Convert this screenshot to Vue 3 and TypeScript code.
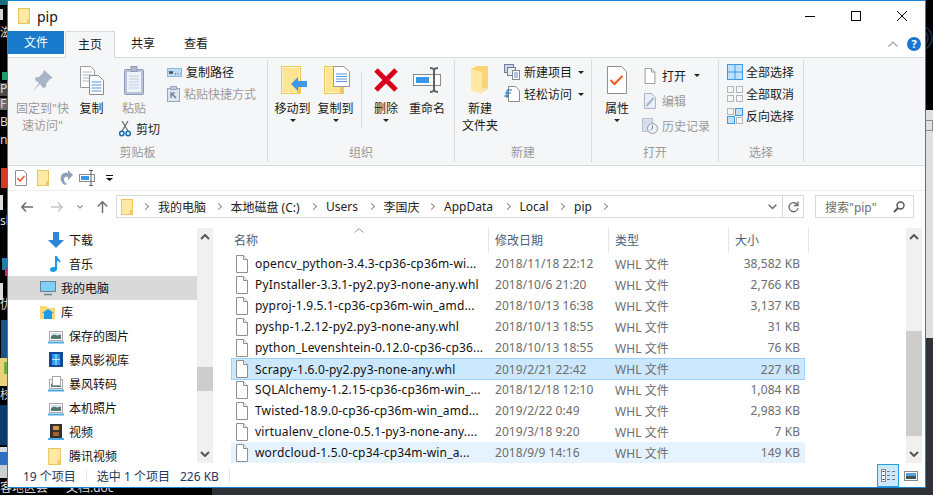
<script setup lang="ts">
interface FileRow {
  name: string
  date: string
  size: string
  state?: 'selected' | 'hover'
}

interface NavRow {
  label: string
  icon: string
  top?: boolean
  active?: boolean
}

const files: FileRow[] = [
  { name: 'opencv_python-3.4.3-cp36-cp36m-wi...', date: '2018/11/18 22:12', size: '38,582 KB' },
  { name: 'PyInstaller-3.3.1-py2.py3-none-any.whl', date: '2018/10/6 21:20', size: '2,766 KB' },
  { name: 'pyproj-1.9.5.1-cp36-cp36m-win_amd...', date: '2018/10/13 16:38', size: '3,137 KB' },
  { name: 'pyshp-1.2.12-py2.py3-none-any.whl', date: '2018/10/13 18:55', size: '31 KB' },
  { name: 'python_Levenshtein-0.12.0-cp36-cp36...', date: '2018/10/13 18:55', size: '76 KB' },
  { name: 'Scrapy-1.6.0-py2.py3-none-any.whl', date: '2019/2/21 22:42', size: '227 KB', state: 'selected' },
  { name: 'SQLAlchemy-1.2.15-cp36-cp36m-win_...', date: '2018/12/18 12:10', size: '1,084 KB' },
  { name: 'Twisted-18.9.0-cp36-cp36m-win_amd...', date: '2019/2/22 0:49', size: '2,983 KB' },
  { name: 'virtualenv_clone-0.5.1-py3-none-any....', date: '2019/3/18 9:20', size: '7 KB' },
  { name: 'wordcloud-1.5.0-cp34-cp34m-win_a...', date: '2018/9/9 14:16', size: '149 KB', state: 'hover' },
]

const navRows: NavRow[] = [
  { label: '下载', icon: 'download' },
  { label: '音乐', icon: 'music' },
  { label: '我的电脑', icon: 'pc', top: true, active: true },
  { label: '库', icon: 'lib', top: true },
  { label: '保存的图片', icon: 'photo' },
  { label: '暴风影视库', icon: 'film' },
  { label: '暴风转码', icon: 'convert' },
  { label: '本机照片', icon: 'photo' },
  { label: '视频', icon: 'video' },
  { label: '腾讯视频', icon: 'folder' },
]

const crumbs = [
  { label: '我的电脑', width: 59.5 },
  { label: '本地磁盘 (C:)', width: 82.5 },
  { label: 'Users', width: 44.5 },
  { label: '李国庆', width: 47.5 },
  { label: 'AppData', width: 62.5 },
  { label: 'Local', width: 41.5 },
  { label: 'pip', width: 30 },
]

const desktopBits = [
  { x: 0, y: 0, w: 7, h: 5, c: '#1b6f78' },
  { x: 0, y: 9, w: 3, h: 11, c: '#d4d4d4' },
  { x: 2, y: 72, w: 5, h: 8, c: '#1f9a6a' },
  { x: 0, y: 83, w: 7, h: 13, c: '#4a4a4a' },
  { x: 0, y: 98, w: 7, h: 12, c: '#6b6b6b' },
  { x: 1, y: 168, w: 6, h: 20, c: '#d23a22' },
  { x: 0, y: 195, w: 3, h: 15, c: '#dcdcdc' },
  { x: 2, y: 258, w: 5, h: 12, c: '#1c7fb0' },
  { x: 5, y: 268, w: 2, h: 8, c: '#c42a62' },
  { x: 0, y: 283, w: 3, h: 17, c: '#dcdcdc' },
  { x: 1, y: 320, w: 6, h: 38, c: '#14558f' },
  { x: 0, y: 358, w: 7, h: 28, c: '#e9d37a' },
  { x: 4, y: 362, w: 3, h: 12, c: '#6cb04a' },
  { x: 0, y: 405, w: 7, h: 40, c: '#0d3a66' },
  { x: 0, y: 447, w: 7, h: 5, c: '#d6dbe0' },
  { x: 0, y: 452, w: 7, h: 13, c: '#2f6fc0' },
  { x: 0, y: 465, w: 7, h: 13, c: '#cfcfcf' },
]

const desktopLabels = [
  { text: '滋', y: 26 },
  { text: 'P', y: 82 },
  { text: 'F', y: 97 },
  { text: 'B', y: 115 },
  { text: 'na', y: 133 },
  { text: 'sh', y: 214 },
  { text: '优', y: 298 },
  { text: '校', y: 388 },
]
</script>

<template>
  <div class="desktop">
    <i
      v-for="bit in desktopBits"
      :key="bit.y + '-' + bit.x"
      class="bit"
      :style="{ left: bit.x + 'px', top: bit.y + 'px', width: bit.w + 'px', height: bit.h + 'px', background: bit.c }"
    ></i>
    <span
      v-for="item in desktopLabels"
      :key="item.text"
      class="desk-label"
      :style="{ top: item.y + 'px' }"
    >{{ item.text }}</span>
    <span class="desk-file first">客地区县</span>
    <span class="desk-file second">文档.doc</span>
    <div class="dark-bottom"></div>
    <div class="strip-right">
      <svg class="rings" width="7" height="60" viewBox="0 0 7 60" fill="none" stroke="#17324f" stroke-width="1.5">
        <circle cx="-6" cy="30" r="8" />
        <circle cx="-6" cy="30" r="12" />
      </svg>
      <div class="strip-gray"><i></i></div>
    </div>

    <svg width="0" height="0" class="defs">
      <defs>
        <symbol id="folder" viewBox="0 0 12 16">
          <rect x="0.5" y="0.5" width="11" height="15" fill="#ffeaa3" stroke="#e9c65c" />
          <rect x="9" y="11" width="3" height="5" fill="#eecb66" />
        </symbol>
        <symbol id="doc" viewBox="0 0 12 18">
          <path d="M.5.5h7l4 4v13H.5z" fill="#fff" stroke="#8f8f8f" />
          <path d="M7.5.5v4h4" fill="#f2f2f2" stroke="#8f8f8f" />
        </symbol>
        <symbol id="bigfolder" viewBox="0 0 20 28">
          <rect x="0.5" y="0.5" width="19" height="27" fill="#ffe591" stroke="#eac557" />
          <rect x="1.5" y="1.5" width="17" height="25" fill="none" stroke="#fff2c4" />
          <rect x="16" y="21" width="4" height="7" fill="#eec95f" />
        </symbol>
        <symbol id="screen" viewBox="0 0 16 16">
          <path d="M0 13.500h16v2H0z" fill="#4fa9e6" />
          <rect x="1.500" y="3.500" width="13" height="9" fill="#fff" stroke="#a8a8a8" />
          <rect x="3" y="5" width="10" height="6" fill="#d5e5ee" />
          <path d="M3 8l3-1.500 3 1 4-1V11H3z" fill="#53776f" />
        </symbol>
      </defs>
    </svg>

    <main class="window">
      <header class="titlebar">
        <svg class="title-icon" width="12" height="16"><use href="#folder" /></svg>
        <span class="title-text">pip</span>
        <div class="controls">
          <svg width="10" height="10" viewBox="0 0 10 10"><path d="M0 5.500h10" stroke="#000" /></svg>
          <svg width="10" height="10" viewBox="0 0 10 10"><rect x=".5" y=".5" width="9" height="9" fill="none" stroke="#000" /></svg>
          <svg width="10" height="10" viewBox="0 0 10 10"><path d="M0 0l10 10M10 0L0 10" stroke="#000" /></svg>
        </div>
      </header>

      <nav class="tabs">
        <span class="tab-file">文件</span>
        <span class="tab-home">主页</span>
        <span class="tab share">共享</span>
        <span class="tab view">查看</span>
        <svg class="collapse" width="10" height="6" viewBox="0 0 10 6"><path d="M.5 5.500L5 1l4.500 4.500" fill="none" stroke="#a0a0a0" stroke-width="1.200" /></svg>
        <span class="help">?</span>
      </nav>

      <section class="ribbon">
        <div class="group g-clip">
          <div class="group-body">
            <div class="big disabled w-pin">
              <div class="big-icon">
                <svg width="22" height="22" viewBox="0 0 22 22">
                  <path d="M12 1l9 8-3 1-4 5 0 3-3 1-3-4-7 7 6-8-4-3 1-3 3 0 4-4z" fill="#aab4c8" />
                </svg>
              </div>
              <span>固定到"快</span>
              <span>速访问"</span>
            </div>
            <div class="big w-copy">
              <div class="big-icon">
                <svg width="24" height="29" viewBox="0 0 24 29">
                  <path d="M.5.5h10l4 4v17H.5z" fill="#fff" stroke="#9a9a9a" />
                  <path d="M2.500 6h9M2.500 9h9M2.500 12h9M2.500 15h9" stroke="#a9b8cc" />
                  <path d="M9.500 9.500h9l5 5v14h-14z" fill="#fff" stroke="#8a8a8a" />
                  <path d="M11.500 16h10M11.500 19h10M11.500 22h10M11.500 25h10" stroke="#5b93dc" />
                </svg>
              </div>
              <span>复制</span>
            </div>
            <div class="paste-col">
              <div class="big disabled">
                <div class="big-icon">
                  <svg width="20" height="29" viewBox="0 0 20 29">
                    <rect x=".5" y="3.500" width="19" height="25" rx="1" fill="#b9c4d8" stroke="#8c9cb8" />
                    <rect x="3" y="6" width="14" height="20" fill="#eef2f9" />
                    <path d="M5 10h10M5 13h10M5 16h10M5 19h10M5 22h10" stroke="#c2cde0" />
                    <rect x="7" y=".5" width="6" height="5" fill="#aeb9cc" stroke="#8c9cb8" />
                  </svg>
                </div>
                <span>粘贴</span>
              </div>
              <div class="cut">
                <svg width="12" height="16" viewBox="0 0 12 16" fill="none">
                  <path d="M3 10L9 0M9 10L3 0" stroke="#707070" stroke-width="1.300" />
                  <circle cx="2.800" cy="12.500" r="2.200" stroke="#1469b4" stroke-width="1.500" />
                  <circle cx="9.200" cy="12.500" r="2.200" stroke="#1469b4" stroke-width="1.500" />
                </svg>
                <span>剪切</span>
              </div>
            </div>
            <div class="small-col clip-small">
              <div class="small">
                <svg width="15" height="9" viewBox="0 0 15 9">
                  <rect x=".5" y=".5" width="14" height="8" fill="#bcdcf5" stroke="#8fb8d8" />
                  <path d="M2 3l1 3 1-3 1 3 1-3M8 6h1M10.500 6h1M13 6h.500" stroke="#333" fill="none" stroke-width=".8" />
                </svg>
                <span>复制路径</span>
              </div>
              <div class="small disabled">
                <svg width="13" height="16" viewBox="0 0 13 16">
                  <rect x=".5" y="2.500" width="12" height="13" fill="#dfe5ee" stroke="#98a6bd" />
                  <rect x="3.500" y=".5" width="6" height="3" fill="#c2ccdc" stroke="#98a6bd" />
                  <path d="M4 12V7h4M5 8l4 4" stroke="#60718f" fill="none" stroke-width="1.200" />
                </svg>
                <span>粘贴快捷方式</span>
              </div>
            </div>
          </div>
          <div class="group-label">剪贴板</div>
        </div>

        <div class="group g-org">
          <div class="group-body">
            <div class="big w-move">
              <div class="big-icon">
                <svg class="shift-r" width="26" height="28" viewBox="0 0 26 28">
                  <use href="#bigfolder" width="20" height="28" />
                  <path d="M10 18l7-7v4h9v6h-9v4z" fill="#3f97e8" />
                </svg>
              </div>
              <span>移动到</span>
              <i class="caret"></i>
            </div>
            <div class="big w-move">
              <div class="big-icon">
                <svg class="shift-r" width="26" height="28" viewBox="0 0 26 28">
                  <use href="#bigfolder" width="20" height="28" />
                  <path d="M9.500.5h10l6 5v15h-16z" fill="#fff" stroke="#9a9a9a" />
                  <path d="M12 8h11M12 10.500h11M12 13h11M12 15.500h11" stroke="#5b93dc" />
                </svg>
              </div>
              <span>复制到</span>
              <i class="caret"></i>
            </div>
            <i class="org-sep"></i>
            <div class="big w-del">
              <div class="big-icon">
                <svg width="26" height="26" viewBox="0 0 26 26"><path d="M3 3l20 20M23 3L3 23" stroke="#d9001b" stroke-width="5" /></svg>
              </div>
              <span>删除</span>
              <i class="caret"></i>
            </div>
            <div class="big w-ren">
              <div class="big-icon">
                <svg width="28" height="26" viewBox="0 0 28 26">
                  <rect x=".5" y="7.500" width="27" height="11" fill="#fff" stroke="#8a8a8a" />
                  <rect x="3" y="10" width="13" height="6" fill="#3a96e6" />
                  <path d="M17 1c1.500 0 3 .5 4 1.500C22 1.500 23.500 1 25 1M21 2.500v21M17 25c1.500 0 3-.5 4-1.500 1 1 2.500 1.500 4 1.500" fill="none" stroke="#606060" stroke-width="2" />
                </svg>
              </div>
              <span>重命名</span>
            </div>
          </div>
          <div class="group-label">组织</div>
        </div>

        <div class="group g-new">
          <div class="group-body">
            <div class="big w-newf">
              <div class="big-icon">
                <svg width="20" height="28" viewBox="0 0 20 28">
                  <path d="M1 3l6-3h11v22H1z" fill="#fbd670" />
                  <path d="M1 3l11 3v22L1 24z" fill="#ffe89f" />
                  <path d="M12 6l7 17-7 3z" fill="#f5d47c" opacity=".6" />
                </svg>
              </div>
              <span>新建</span>
              <span>文件夹</span>
            </div>
            <div class="small-col new-small">
              <div class="small">
                <svg width="16" height="16" viewBox="0 0 16 16">
                  <rect x=".5" y=".5" width="9" height="8" fill="#c8dcf0" stroke="#6b7f9a" />
                  <rect x="3.500" y="3.500" width="8" height="8" fill="#e8eef5" stroke="#7a7a7a" />
                  <rect x="8.500" y="6.500" width="7" height="9" fill="#fff" stroke="#8a8a8a" />
                  <path d="M10 9h4M10 11h4M10 13h4" stroke="#5b93dc" />
                </svg>
                <span>新建项目</span>
                <i class="caret side"></i>
              </div>
              <div class="small">
                <svg width="16" height="16" viewBox="0 0 16 16">
                  <path d="M4.500.5h7l4 4v11h-11z" fill="#fff" stroke="#8a8a8a" />
                  <path d="M3 4h5M1 7h6M0 10h5M3 4v8" stroke="#1469b4" fill="none" />
                </svg>
                <span>轻松访问</span>
                <i class="caret side"></i>
              </div>
            </div>
          </div>
          <div class="group-label">新建</div>
        </div>

        <div class="group g-open">
          <div class="group-body">
            <div class="big w-prop">
              <div class="big-icon">
                <svg width="20" height="28" viewBox="0 0 20 28">
                  <path d="M.5.5h14l5 5v22H.5z" fill="#fff" stroke="#8f8f8f" />
                  <path d="M3.500 14l4 4 8-8" fill="none" stroke="#f0591e" stroke-width="2" />
                </svg>
              </div>
              <span>属性</span>
              <i class="caret"></i>
            </div>
            <div class="small-col open-small">
              <div class="small">
                <svg class="ic-12" width="12" height="16"><use href="#doc" /></svg>
                <span>打开</span>
                <i class="caret side"></i>
              </div>
              <div class="small disabled">
                <svg class="ic-12" width="12" height="16" viewBox="0 0 12 16">
                  <path d="M.5.5h7l4 4v11H.5z" fill="#eaeff7" stroke="#a6b4cc" />
                  <path d="M2.500 13l7-8" stroke="#a6b4cc" stroke-width="2" />
                </svg>
                <span>编辑</span>
              </div>
              <div class="small disabled hist-row">
                <svg width="16" height="16" viewBox="0 0 16 16">
                  <rect x=".5" y=".5" width="10" height="13" fill="#d7deea" stroke="#b7c2d4" />
                  <circle cx="10.500" cy="10.500" r="5" fill="#eef1f6" stroke="#8d9ab0" />
                  <path d="M10.500 7.500v3l-2 1.500" stroke="#6c7a92" fill="none" />
                </svg>
                <span>历史记录</span>
              </div>
            </div>
          </div>
          <div class="group-label">打开</div>
        </div>

        <div class="group g-select">
          <div class="group-body">
            <div class="small-col select-small">
              <div class="small">
                <svg width="16" height="16" viewBox="0 0 16 16">
                  <rect x=".5" y=".5" width="15" height="15" fill="#bfe0fb" stroke="#3a9ae8" />
                  <path d="M8 0v16M0 8h16" stroke="#3a9ae8" />
                </svg>
                <span>全部选择</span>
              </div>
              <div class="small">
                <svg width="16" height="16" viewBox="0 0 16 16" fill="none" stroke="#b5b5b5">
                  <rect x=".5" y=".5" width="6" height="6" />
                  <rect x="9.500" y=".5" width="6" height="6" />
                  <rect x=".5" y="9.500" width="6" height="6" />
                  <rect x="9.500" y="9.500" width="6" height="6" />
                </svg>
                <span>全部取消</span>
              </div>
              <div class="small">
                <svg width="16" height="16" viewBox="0 0 16 16" fill="none" stroke="#b5b5b5">
                  <rect x=".5" y=".5" width="6" height="6" />
                  <rect x="8.500" y=".5" width="7" height="7" fill="#bfe0fb" stroke="#3a9ae8" />
                  <rect x=".5" y="8.500" width="7" height="7" fill="#bfe0fb" stroke="#3a9ae8" />
                  <rect x="9.500" y="9.500" width="6" height="6" />
                </svg>
                <span>反向选择</span>
              </div>
            </div>
          </div>
          <div class="group-label">选择</div>
        </div>
      </section>

      <div class="qat">
        <svg width="12" height="16" viewBox="0 0 12 16">
          <path d="M.5.5h8l3 3v12H.5z" fill="#fff" stroke="#8f8f8f" />
          <path d="M2.500 8l2.500 3 4.500-5" fill="none" stroke="#f0591e" stroke-width="1.500" />
        </svg>
        <svg width="12" height="16"><use href="#folder" /></svg>
        <svg width="14" height="16" viewBox="0 0 14 16">
          <path d="M6 15C2 13 1 9 2 6c1-3 4-4 7-3V0l5 5-5 5V7C7 6.500 5.500 7 5 8.500 4.500 10.500 6 13 8 14z" fill="#8fa1bb" />
        </svg>
        <svg class="qat-rename" width="16" height="16" viewBox="0 0 16 16">
          <rect x=".5" y="4.500" width="15" height="7" fill="#fff" stroke="#8a8a8a" />
          <rect x="2" y="6" width="8" height="4" fill="#3a96e6" />
          <path d="M10 .5h4M12 .5v15M10 15.500h4" fill="none" stroke="#606060" />
        </svg>
        <svg class="qat-more" width="7" height="6" viewBox="0 0 7 6"><path d="M0 0h7v1H0zM0 3h7L3.500 6z" fill="#111" /></svg>
      </div>

      <div class="addressbar">
        <div class="nav-buttons">
          <svg width="12" height="10" viewBox="0 0 12 10"><path d="M5 .5L.8 5 5 9.500M1 5h11" fill="none" stroke="#6d6d6d" stroke-width="1.500" /></svg>
          <svg class="fwd" width="12" height="10" viewBox="0 0 12 10"><path d="M7 .5L11.200 5 7 9.500M11 5H0" fill="none" stroke="#c6c6c6" stroke-width="1.500" /></svg>
          <svg class="hist" width="6" height="4" viewBox="0 0 6 4"><path d="M.5.500L3 3 5.500.5" fill="none" stroke="#8d8d8d" stroke-width="1.200" /></svg>
          <svg class="up" width="11" height="12" viewBox="0 0 11 12"><path d="M.7 5.500L5.500.8l4.800 4.700M5.500 1v11" fill="none" stroke="#6d6d6d" stroke-width="1.500" /></svg>
        </div>
        <div class="path">
          <svg class="path-folder" width="12" height="16"><use href="#folder" /></svg>
          <i class="crumb-arrow first"></i>
          <template v-for="crumb in crumbs" :key="crumb.label">
            <span class="crumb" :style="{ width: crumb.width + 'px' }">{{ crumb.label }}</span>
            <i class="crumb-arrow"></i>
          </template>
          <div class="path-end">
            <svg width="9" height="6" viewBox="0 0 9 6"><path d="M.7.7L4.500 4.500 8.300.7" fill="none" stroke="#6d6d6d" stroke-width="1.500" /></svg>
            <i class="path-sep"></i>
            <svg width="11" height="12" viewBox="0 0 11 12"><path d="M9.500 4a4.500 4.500 0 1 0 .5 3M10 .5v4H6" fill="none" stroke="#6d6d6d" stroke-width="1.300" /></svg>
          </div>
        </div>
        <div class="search">
          <span>搜索"pip"</span>
          <svg width="12" height="12" viewBox="0 0 12 12"><circle cx="7.500" cy="4.500" r="3.500" fill="none" stroke="#555" stroke-width="1.400" /><path d="M5 7l-4 4" stroke="#555" stroke-width="2" /></svg>
        </div>
      </div>

      <div class="content">
        <aside class="tree">
          <div
            v-for="row in navRows"
            :key="row.label"
            class="tree-row"
            :class="{ 'tree-row--top': row.top, 'tree-row--active': row.active }"
          >
            <svg v-if="row.icon === 'download'" width="16" height="16" viewBox="0 0 16 16"><path d="M5 0h6v8h5l-8 8-8-8h5z" fill="#2f86d6" /></svg>
            <svg v-else-if="row.icon === 'music'" width="16" height="16" viewBox="0 0 16 16"><path d="M7 0h2c.5 3 4 3.500 3.500 7C11 5.500 10 5 9 5v8c0 2-2 3-4 3s-3-1-3-2.500S4 10.500 7 11.200z" fill="#1c9be6" /></svg>
            <svg v-else-if="row.icon === 'pc'" width="16" height="16" viewBox="0 0 16 16"><rect x=".5" y="1.500" width="15" height="10" fill="#7fd0f7" stroke="#6a8296" /><path d="M4 14.500h8" stroke="#6a8296" stroke-width="1.500" /></svg>
            <svg v-else-if="row.icon === 'lib'" width="16" height="16" viewBox="0 0 16 16"><path d="M0 2h6l2 2h7v11H0z" fill="#fcd873" /><path d="M8 5l6 4h-2v6H4V9H2z" fill="#1f9ae8" /></svg>
            <svg v-else-if="row.icon === 'film'" width="16" height="16" viewBox="0 0 16 16"><rect x="1" width="14" height="15" fill="#16489a" /><rect x="4" y="2" width="8" height="11" fill="#2a9cf0" /><path d="M8 2v11M4 7.500h8" stroke="#cfe9ff" /></svg>
            <svg v-else-if="row.icon === 'convert'" width="16" height="16"><use href="#screen" /><rect x="4.500" y=".5" width="8" height="9" fill="#fff" stroke="#a8a8a8" /></svg>
            <svg v-else-if="row.icon === 'video'" width="16" height="16" viewBox="0 0 16 16"><path d="M0 14h16v2H0z" fill="#4fa9e6" /><rect x="2" width="12" height="14" fill="#333" /><rect x="5" y="2" width="6" height="4" fill="#d89a3a" /><rect x="5" y="8" width="6" height="4" fill="#a3602a" /></svg>
            <svg v-else-if="row.icon === 'folder'" width="13" height="17" class="tree-folder"><use href="#folder" width="13" height="17" /></svg>
            <svg v-else width="16" height="16"><use href="#screen" /></svg>
            <span>{{ row.label }}</span>
          </div>
        </aside>
        <div class="scroll scroll--left">
          <svg class="scroll-up" width="10" height="6" viewBox="0 0 10 6"><path d="M1 5l4-4 4 4" fill="none" stroke="#555" stroke-width="2" /></svg>
          <i class="thumb"></i>
          <svg class="scroll-down" width="10" height="6" viewBox="0 0 10 6"><path d="M1 1l4 4 4-4" fill="none" stroke="#555" stroke-width="2" /></svg>
        </div>

        <div class="list">
          <div class="list-head">
            <svg class="sort" width="10" height="5" viewBox="0 0 10 5"><path d="M.5 4.500L5 .7l4.500 3.800" fill="none" stroke="#9a9a9a" /></svg>
            <div class="head-cell h-name">名称</div>
            <div class="head-cell h-date">修改日期</div>
            <div class="head-cell h-type">类型</div>
            <div class="head-cell h-size">大小</div>
          </div>
          <div
            v-for="file in files"
            :key="file.name"
            class="file"
            :class="file.state ? 'file--' + file.state : ''"
          >
            <svg width="12" height="18"><use href="#doc" /></svg>
            <span class="file-name">{{ file.name }}</span>
            <span class="file-meta">{{ file.date }}</span>
            <span class="file-meta">WHL 文件</span>
            <span class="file-meta file-size">{{ file.size }}</span>
          </div>
        </div>
        <div class="scroll scroll--right">
          <svg class="scroll-up" width="10" height="6" viewBox="0 0 10 6"><path d="M1 5l4-4 4 4" fill="none" stroke="#555" stroke-width="2" /></svg>
          <i class="thumb"></i>
          <svg class="scroll-down" width="10" height="6" viewBox="0 0 10 6"><path d="M1 1l4 4 4-4" fill="none" stroke="#555" stroke-width="2" /></svg>
        </div>
      </div>

      <footer class="status">
        <span class="st-count">19 个项目</span>
        <i class="st-sep"></i>
        <span class="st-sel">选中 1 个项目</span>
        <span class="st-size">226 KB</span>
        <i class="st-sep"></i>
        <div class="view-buttons">
          <div class="view-details">
            <svg width="15" height="13" viewBox="0 0 15 13">
              <rect x=".5" y=".5" width="4" height="12" fill="#fff" stroke="#8a8a8a" />
              <path d="M1.500 2.500h2M1.500 6.500h2M1.500 10.500h2" stroke="#333" />
              <path d="M6 2.500h3M11 2.500h3M6 6.500h3M11 6.500h3M6 10.500h3M11 10.500h3" stroke="#7a7a7a" />
            </svg>
          </div>
          <svg class="view-thumb" width="14" height="10" viewBox="0 0 14 10">
            <rect x=".5" y=".5" width="13" height="9" fill="#fff" stroke="#8a8a8a" />
            <rect x="2" y="2" width="10" height="3" fill="#4fa3de" />
            <rect x="2" y="5" width="10" height="3" fill="#3c5a5a" />
          </svg>
        </div>
      </footer>
    </main>
  </div>
</template>

<style>
html,
body {
  margin: 0;
  background: #000;
}
</style>

<style scoped>
.desktop {
  position: relative;
  width: 933px;
  height: 495px;
  overflow: hidden;
  background: #000;
  font-family: 'Noto Sans', 'Noto Sans CJK SC', sans-serif;
  font-size: 12px;
  color: #1a1a1a;
}

.defs {
  position: absolute;
}

svg {
  display: block;
  flex: none;
}

.bit {
  position: absolute;
}

.desk-label {
  position: absolute;
  left: 0;
  width: 7px;
  overflow: hidden;
  color: #ddd;
  line-height: 14px;
  white-space: nowrap;
}

.desk-file {
  position: absolute;
  top: 480px;
  color: #ddd;
  line-height: 16px;
  white-space: nowrap;
}

.desk-file.first {
  left: 0;
}

.desk-file.second {
  left: 66px;
}

.dark-bottom {
  position: absolute;
  left: 212px;
  right: 0;
  top: 488px;
  bottom: 0;
  background: #2f3337;
}

.strip-right {
  position: absolute;
  left: 926px;
  top: 0;
  width: 7px;
  height: 495px;
  background: #2f3337;
}

.rings {
  position: absolute;
  top: 8px;
}

.strip-gray {
  position: absolute;
  top: 110px;
  width: 7px;
  height: 228px;
  background: #dfdfdf;
}

.strip-gray i {
  display: block;
  width: 6px;
  height: 9px;
  margin-top: 10px;
  border: 1px solid #8a8a8a;
  border-left: 0;
}

.strip-right::before {
  content: '';
  position: absolute;
  inset: 0 0 385px;
  background: #000;
}

.window {
  position: absolute;
  left: 7px;
  top: 0;
  width: 919px;
  height: 488px;
  box-sizing: border-box;
  border: 1px solid #1883d7;
  display: flex;
  flex-direction: column;
  background: #fff;
}

.titlebar {
  height: 30px;
  flex: none;
  display: flex;
  align-items: center;
  padding-left: 10px;
}

.title-text {
  margin-left: 7px;
  font-size: 14px;
  color: #111;
}

.controls {
  margin-left: auto;
  display: flex;
  gap: 36px;
  padding-right: 18px;
  margin-top: -1px;
}

.tabs {
  height: 27px;
  flex: none;
  box-sizing: border-box;
  display: flex;
  align-items: flex-start;
  border-bottom: 1px solid #dadbdc;
  position: relative;
}

.tab-file {
  width: 56px;
  height: 23px;
  line-height: 23px;
  text-align: center;
  color: #fff;
  background: #1979ca;
}

.tab-home {
  width: 50px;
  height: 27px;
  margin-left: 1px;
  box-sizing: border-box;
  border: 1px solid #dadbdc;
  border-bottom: 0;
  background: #f5f6f7;
  text-align: center;
  line-height: 25px;
}

.tab {
  line-height: 25px;
}

.share {
  margin-left: 16px;
}

.view {
  margin-left: 29px;
}

.collapse {
  position: absolute;
  left: 880px;
  top: 10px;
}

.help {
  position: absolute;
  left: 899px;
  top: 6px;
  width: 14px;
  height: 14px;
  border-radius: 50%;
  background: #1b78d2;
  color: #fff;
  font-size: 11px;
  font-weight: 700;
  line-height: 14px;
  text-align: center;
}

.ribbon {
  height: 108px;
  flex: none;
  box-sizing: border-box;
  display: flex;
  padding-top: 2px;
  background: #f5f6f7;
  border-bottom: 1px solid #dadbdc;
}

.group {
  height: 102px;
  box-sizing: border-box;
  display: flex;
  flex-direction: column;
  border-right: 1px solid #dadbdc;
}

.group-body {
  height: 83px;
  display: flex;
}

.group-label {
  height: 19px;
  line-height: 19px;
  text-align: center;
  color: #9a9a9a;
}

.g-clip {
  width: 260px;
}

.g-clip .group-body {
  padding-left: 7px;
}

.g-org {
  width: 187px;
}

.g-org .group-body {
  padding-left: 3px;
}

.g-new {
  width: 137px;
}

.g-new .group-body {
  padding-left: 3px;
}

.g-open {
  width: 127px;
}

.g-open .group-body {
  padding-left: 5px;
}

.g-select {
  width: 85px;
}

.g-select .group-body {
  padding-left: 8px;
}

.big {
  display: flex;
  flex-direction: column;
  align-items: center;
  line-height: 17px;
  white-space: nowrap;
}

.big-icon {
  height: 40px;
  display: flex;
  align-items: center;
  justify-content: center;
}

.disabled {
  color: #9a9a9a;
}

.w-pin {
  width: 55px;
}

.w-copy {
  width: 43px;
}

.paste-col {
  width: 54px;
  margin-left: -6px;
}

.cut {
  display: flex;
  align-items: center;
  gap: 5px;
  margin-top: 3px;
  padding-left: 12px;
}

.clip-small {
  margin-left: 6px;
}

.small-col {
  display: flex;
  flex-direction: column;
  padding-top: 1px;
}

.small {
  height: 22px;
  display: flex;
  align-items: center;
  gap: 4px;
  white-space: nowrap;
}

.new-small {
  margin-left: 2px;
}

.select-small .small {
  gap: 3px;
}

.open-small {
  margin-left: 5px;
  padding-top: 3px;
}

.open-small .small {
  height: 25px;
  gap: 6px;
}

.open-small .hist-row {
  gap: 4px;
}

.ic-12 {
  margin-left: 2px;
}

.w-move {
  width: 43px;
}

.shift-r {
  margin-left: 3px;
}

.org-sep {
  width: 1px;
  height: 55px;
  margin: 13px 6px 0 4px;
  background: #dadbdc;
}

.w-del {
  width: 36px;
}

.w-ren {
  width: 44px;
  margin-left: 1px;
}

.w-newf {
  width: 44px;
}

.w-prop {
  width: 40px;
}

.caret {
  width: 0;
  height: 0;
  margin-top: 2px;
  border-left: 3px solid transparent;
  border-right: 3px solid transparent;
  border-top: 3px solid #222;
}

.caret.side {
  margin: 0 0 0 2px;
}

.qat {
  height: 25px;
  flex: none;
  box-sizing: border-box;
  display: flex;
  align-items: center;
  padding-left: 7px;
  gap: 10px;
  border-bottom: 1px solid #f0f0f0;
}

.qat-rename {
  margin-left: -4px;
}

.qat-more {
  margin-left: 1px;
}

.addressbar {
  height: 31px;
  flex: none;
  display: flex;
  align-items: center;
}

.nav-buttons {
  width: 108px;
  flex: none;
  display: flex;
  align-items: center;
  padding-left: 13px;
  box-sizing: border-box;
}

.fwd {
  margin-left: 18px;
}

.hist {
  margin-left: 14px;
}

.up {
  margin-left: 14px;
}

.path {
  width: 688px;
  height: 23px;
  box-sizing: border-box;
  display: flex;
  align-items: center;
  border: 1px solid #d9d9d9;
  padding-left: 4px;
}

.crumb {
  flex: none;
  white-space: nowrap;
  color: #222;
}

.crumb-arrow {
  width: 4px;
  height: 4px;
  flex: none;
  margin: 0 10px 0 -2px;
  border-top: 1.500px solid #8a8a8a;
  border-right: 1.500px solid #8a8a8a;
  transform: rotate(45deg);
}

.crumb-arrow.first {
  margin: 0 10px 0 10px;
}

.path-end {
  margin-left: auto;
  height: 100%;
  display: flex;
  align-items: center;
}

.path-sep {
  width: 1px;
  height: 100%;
  margin: 0 5px;
  background: #d9d9d9;
}

.path-end svg:last-child {
  margin-right: 4px;
}

.search {
  width: 99px;
  height: 23px;
  margin-left: 11px;
  box-sizing: border-box;
  display: flex;
  align-items: center;
  justify-content: space-between;
  padding: 0 8px 0 9px;
  border: 1px solid #d9d9d9;
  color: #6d6d6d;
}

.content {
  height: 243px;
  flex: none;
  display: flex;
}

.tree {
  width: 189px;
  flex: none;
  padding-top: 6px;
  overflow: hidden;
}

.tree-row {
  height: 24px;
  display: flex;
  align-items: center;
  gap: 5px;
  padding-left: 40px;
  color: #111;
}

.tree-row--top {
  padding-left: 32px;
}

.tree-row--active {
  background: #d9d9d9;
}

.tree-folder {
  margin-right: 3px;
}

.scroll {
  width: 16px;
  flex: none;
  margin: 6px 0 2px;
  display: flex;
  flex-direction: column;
  background: #f0f0f0;
}

.scroll-up {
  margin: 6px auto;
}

.scroll-down {
  margin: auto auto 6px;
}

.thumb {
  display: block;
  background: #cdcdcd;
}

.scroll--left .thumb {
  margin-top: 121px;
  height: 24px;
}

.scroll--right .thumb {
  margin-top: 85px;
  height: 105px;
}

.list {
  width: 693px;
  flex: none;
  padding-left: 3px;
  box-sizing: border-box;
}

.list-head {
  position: relative;
  height: 31px;
  box-sizing: border-box;
  padding-top: 6px;
  display: flex;
  color: #4c607a;
}

.sort {
  position: absolute;
  left: 138px;
  top: 6px;
}

.head-cell {
  height: 25px;
  box-sizing: border-box;
  padding: 5px 0 0 6px;
  line-height: 16px;
  border-right: 1px solid #e5e5e5;
}

.h-name {
  width: 273px;
  padding-left: 18px;
}

.h-date,
.h-type {
  width: 120px;
}

.h-size {
  width: 80px;
}

.file {
  width: 574px;
  height: 21px;
  margin-left: 15px;
  box-sizing: border-box;
  display: grid;
  grid-template-columns: 19px 240px 120px 100px 85px;
  align-items: center;
  padding-left: 5px;
  white-space: nowrap;
  color: #111;
}

.file--selected {
  height: 22px;
  margin-bottom: -1px;
  padding-left: 4px;
  background: #cce8ff;
  border: 1px solid #99d1ff;
}

.file--hover {
  background: #e5f3ff;
}

.file-name {
  letter-spacing: 0.17px;
}

.file-meta {
  color: #6d6d6d;
  letter-spacing: 0.05px;
}

.file-size {
  text-align: right;
}

.status {
  height: 22px;
  flex: none;
  display: flex;
  align-items: center;
  color: #1e395b;
  position: relative;
}

.st-count {
  margin-left: 15px;
}

.st-sep {
  width: 1px;
  height: 14px;
  margin: 0 10px;
  background: #e5e5e5;
}

.st-sel {
  margin-right: 10px;
}

.view-buttons {
  position: absolute;
  left: 869px;
  top: -1px;
  display: flex;
  align-items: center;
  gap: 5px;
}

.view-details {
  width: 22px;
  height: 23px;
  box-sizing: border-box;
  display: flex;
  align-items: center;
  justify-content: center;
  background: #cce8ff;
  border: 1px solid #26a0da;
}
</style>
